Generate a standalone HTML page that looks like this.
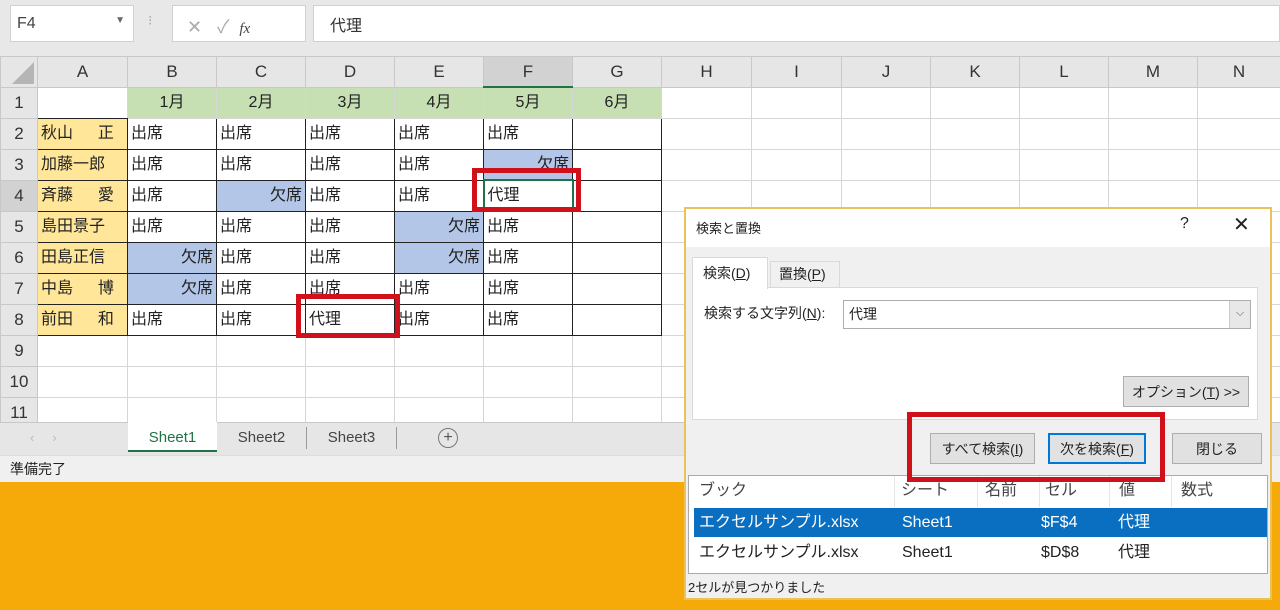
<!DOCTYPE html>
<html><head><meta charset="utf-8"><style>
*{box-sizing:border-box;margin:0;padding:0}
body{width:1280px;height:610px;overflow:hidden;position:relative;background:#e8e8e8;font-family:"Liberation Sans","Noto Sans CJK JP",sans-serif;color:#222}
.a{position:absolute}
table{border-collapse:collapse;table-layout:fixed;position:absolute;left:0;top:56px;width:1280px;background:#fff}
td{border:1px solid #d6d6d6;height:31px;font-size:16px;padding:0 3px;white-space:nowrap;overflow:hidden;line-height:29px}
tr.h td{height:30px;background:#e6e6e6;text-align:center;color:#333;font-size:17px;border-color:#c8c8c8}
td.rh{background:#e6e6e6;text-align:center;color:#333;font-size:17px;border-color:#c8c8c8;padding:0}
td.g{background:#c6e0b4;text-align:center}
td.y{background:#ffe699}
td.b{background:#b4c6e7;text-align:right}
td.k{border-color:#222}
tr.h td.sel{background:#d2d2d2;border-bottom:2px solid #217346}
.red{position:absolute;border:5px solid #d0101a}
.btn{position:absolute;background:#e1e1e1;border:1px solid #adadad;font-size:14px;text-align:center}
.r span{position:absolute;top:0;line-height:29px}
</style></head><body>
<div class="a" style="left:10px;top:5px;width:124px;height:37px;background:#fff;border:1px solid #d0d0d0;font-size:16px;padding:9px 6px;color:#444">F4<span style="position:absolute;right:8px;top:9px;font-size:10px;color:#666">▼</span></div>
<div class="a" style="left:148px;top:12px;color:#aaa;font-size:14px">⁝</div>
<div class="a" style="left:172px;top:5px;width:134px;height:37px;background:#fff;border:1px solid #d0d0d0;font-size:18px;color:#aaa;padding:7px 14px">✕ &nbsp; ✓ &nbsp;<i style="font-family:'Liberation Serif',serif;color:#444;font-size:15px">fx</i></div>
<div class="a" style="left:313px;top:5px;width:967px;height:37px;background:#fff;border:1px solid #d0d0d0;font-size:16px;padding:6px 16px;color:#333">代理</div>

<table>
<colgroup><col style="width:37px"><col style="width:90px"><col style="width:89px"><col style="width:89px"><col style="width:89px"><col style="width:89px"><col style="width:89px"><col style="width:89px"><col style="width:90px"><col style="width:90px"><col style="width:89px"><col style="width:89px"><col style="width:89px"><col style="width:89px"><col style="width:83px"></colgroup>
<tr class="h"><td style="position:relative"><div style="position:absolute;right:3px;bottom:3px;width:0;height:0;border-left:22px solid transparent;border-bottom:22px solid #b5b5b5"></div></td><td>A</td><td>B</td><td>C</td><td>D</td><td>E</td><td class="sel">F</td><td>G</td><td>H</td><td>I</td><td>J</td><td>K</td><td>L</td><td>M</td><td>N</td></tr>
<tr><td class="rh">1</td><td style="border-bottom-color:#222"></td><td class="g">1月</td><td class="g">2月</td><td class="g">3月</td><td class="g">4月</td><td class="g">5月</td><td class="g">6月</td><td></td><td></td><td></td><td></td><td></td><td></td><td></td></tr>
<tr><td class="rh">2</td><td class="y k">秋山　&nbsp;&nbsp;正</td><td class="k">出席</td><td class="k">出席</td><td class="k">出席</td><td class="k">出席</td><td class="k">出席</td><td class="k"></td><td></td><td></td><td></td><td></td><td></td><td></td><td></td></tr>
<tr><td class="rh">3</td><td class="y k">加藤一郎</td><td class="k">出席</td><td class="k">出席</td><td class="k">出席</td><td class="k">出席</td><td class="b k">欠席</td><td class="k"></td><td></td><td></td><td></td><td></td><td></td><td></td><td></td></tr>
<tr><td class="rh" style="background:#d2d2d2">4</td><td class="y k">斉藤　&nbsp;&nbsp;愛</td><td class="k">出席</td><td class="b k">欠席</td><td class="k">出席</td><td class="k">出席</td><td class="k" style="border:2px solid #217346">代理</td><td class="k"></td><td></td><td></td><td></td><td></td><td></td><td></td><td></td></tr>
<tr><td class="rh">5</td><td class="y k">島田景子</td><td class="k">出席</td><td class="k">出席</td><td class="k">出席</td><td class="b k">欠席</td><td class="k">出席</td><td class="k"></td><td></td><td></td><td></td><td></td><td></td><td></td><td></td></tr>
<tr><td class="rh">6</td><td class="y k">田島正信</td><td class="b k">欠席</td><td class="k">出席</td><td class="k">出席</td><td class="b k">欠席</td><td class="k">出席</td><td class="k"></td><td></td><td></td><td></td><td></td><td></td><td></td><td></td></tr>
<tr><td class="rh">7</td><td class="y k">中島　&nbsp;&nbsp;博</td><td class="b k">欠席</td><td class="k">出席</td><td class="k">出席</td><td class="k">出席</td><td class="k">出席</td><td class="k"></td><td></td><td></td><td></td><td></td><td></td><td></td><td></td></tr>
<tr><td class="rh">8</td><td class="y k">前田　&nbsp;&nbsp;和</td><td class="k">出席</td><td class="k">出席</td><td class="k">代理</td><td class="k">出席</td><td class="k">出席</td><td class="k"></td><td></td><td></td><td></td><td></td><td></td><td></td><td></td></tr>
<tr><td class="rh">9</td><td></td><td></td><td></td><td></td><td></td><td></td><td></td><td></td><td></td><td></td><td></td><td></td><td></td><td></td></tr>
<tr><td class="rh">10</td><td></td><td></td><td></td><td></td><td></td><td></td><td></td><td></td><td></td><td></td><td></td><td></td><td></td><td></td></tr>
<tr><td class="rh" style="height:27px">11</td><td></td><td></td><td></td><td></td><td></td><td></td><td></td><td></td><td></td><td></td><td></td><td></td><td></td><td></td></tr>
</table>

<div class="red" style="left:472px;top:168px;width:109px;height:44px"></div>
<div class="red" style="left:296px;top:294px;width:104px;height:44px"></div>

<div class="a" style="left:0;top:422px;width:1280px;height:33px;background:#e6e6e6;border-top:1px solid #c8c8c8"></div>
<div class="a" style="left:30px;top:430px;color:#bbb;font-size:13px">‹ &nbsp; &nbsp; ›</div>
<div class="a" style="left:128px;top:422px;width:89px;height:30px;background:#fff;border-bottom:2px solid #217346;color:#217346;font-size:15px;text-align:center;padding-top:7px">Sheet1</div>
<div class="a" style="left:217px;top:427px;width:90px;height:22px;border-right:1px solid #999;font-size:15px;text-align:center;color:#444;padding-top:2px">Sheet2</div>
<div class="a" style="left:307px;top:427px;width:90px;height:22px;border-right:1px solid #999;font-size:15px;text-align:center;color:#444;padding-top:2px">Sheet3</div>
<div class="a" style="left:438px;top:428px;width:20px;height:20px;border:1px solid #777;border-radius:50%;text-align:center;font-size:16px;line-height:17px;color:#555">+</div>
<div class="a" style="left:0;top:455px;width:1280px;height:27px;background:#f0f0f0;font-size:14px;padding:3px 10px;border-top:1px solid #ddd">準備完了</div>
<div class="a" style="left:0;top:482px;width:1280px;height:128px;background:#f5aa0a"></div>

<div class="a" style="left:684px;top:207px;width:588px;height:393px;background:#f0f0f0;border:2px solid #e9c25a">
 <div class="a" style="left:0;top:0;width:584px;height:38px;background:#fff"></div>
 <div class="a" style="left:10px;top:9px;font-size:13px">検索と置換</div>
 <div class="a" style="left:494px;top:6px;font-size:16px">?</div>
 <div class="a" style="left:547px;top:3px;font-size:20px">✕</div>
 <div class="a" style="left:6px;top:78px;width:566px;height:133px;background:#fff;border:1px solid #d9d9d9"></div>
 <div class="a" style="left:6px;top:48px;width:76px;height:32px;background:#fff;border:1px solid #d9d9d9;border-bottom:none;font-size:14px;padding:5px 10px">検索(<u>D</u>)</div>
 <div class="a" style="left:84px;top:52px;width:70px;height:26px;background:#f0f0f0;border:1px solid #d9d9d9;border-bottom:none;font-size:14px;padding:2px 8px">置換(<u>P</u>)</div>
 <div class="a" style="left:18px;top:94px;font-size:14px">検索する文字列(<u>N</u>):</div>
 <div class="a" style="left:157px;top:91px;width:408px;height:29px;background:#fff;border:1px solid #adadad;font-size:14px;padding:3px 5px">代理</div>
 <div class="a" style="left:543px;top:92px;width:21px;height:27px;background:#e8e8e8;border-left:1px solid #ccc;font-size:11px;text-align:center;padding-top:6px;color:#555">⌵</div>
 <div class="btn" style="left:437px;top:167px;width:126px;height:31px;padding-top:5px">オプション(<u>T</u>) &gt;&gt;</div>
 <div class="btn" style="left:244px;top:224px;width:105px;height:31px;padding-top:5px">すべて検索(<u>I</u>)</div>
 <div class="btn" style="left:362px;top:224px;width:98px;height:31px;padding-top:4px;border:2px solid #0078d7">次を検索(<u>F</u>)</div>
 <div class="btn" style="left:486px;top:224px;width:90px;height:31px;padding-top:5px">閉じる</div>
 <div class="a" style="left:2px;top:266px;width:580px;height:99px;background:#fff;border:1px solid #aaa;font-size:16px">
  <div class="a r" style="left:0;top:0;width:578px;height:31px;color:#444">
   <span style="left:10px">ブック</span><span style="left:212px">シート</span><span style="left:296px">名前</span><span style="left:356px">セル</span><span style="left:430px">値</span><span style="left:492px">数式</span>
   <div class="a" style="left:205px;top:0;height:31px;border-left:1px solid #e5e5e5"></div><div class="a" style="left:288px;top:0;height:31px;border-left:1px solid #e5e5e5"></div><div class="a" style="left:350px;top:0;height:31px;border-left:1px solid #e5e5e5"></div><div class="a" style="left:420px;top:0;height:31px;border-left:1px solid #e5e5e5"></div><div class="a" style="left:482px;top:0;height:31px;border-left:1px solid #e5e5e5"></div>
  </div>
  <div class="a r" style="left:5px;top:32px;width:573px;height:29px;background:#0a6fc0;color:#fff">
   <span style="left:5px">エクセルサンプル.xlsx</span><span style="left:208px">Sheet1</span><span style="left:347px">$F$4</span><span style="left:424px">代理</span>
  </div>
  <div class="a r" style="left:5px;top:62px;width:573px;height:29px;color:#222">
   <span style="left:5px">エクセルサンプル.xlsx</span><span style="left:208px">Sheet1</span><span style="left:347px">$D$8</span><span style="left:424px">代理</span>
  </div>
 </div>
 <div class="a" style="left:2px;top:368px;font-size:13px">2セルが見つかりました</div>
</div>
<div class="red" style="left:907px;top:412px;width:258px;height:70px"></div>
</body></html>
